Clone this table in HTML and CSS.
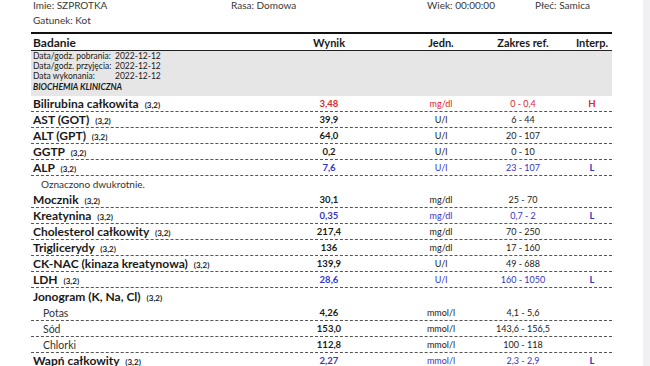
FILE: index.html
```html
<!DOCTYPE html>
<html lang="pl">
<head>
  <meta charset="UTF-8" />
  <title>Wynik badania</title>
  <link rel="stylesheet" href="styles.css">
</head>
<body>
  <div class="page">
    <div class="info">
      <span>Imie: SZPROTKA</span>
      <span>Rasa: Domowa</span>
      <span>Wiek: 00:00:00</span>
      <span>Płeć: Samica</span>
    </div>
    <div class="info second">
      <span>Gatunek: Kot</span>
    </div>

    <div class="row thead">
      <span class="name">Badanie</span>
      <span>Wynik</span>
      <span>Jedn.</span>
      <span>Zakres ref.</span>
      <span>Interp.</span>
    </div>

    <div class="meta">
      <span>Data/godz. pobrania:</span><span>2022-12-12</span>
      <span>Data/godz. przyjęcia:</span><span>2022-12-12</span>
      <span>Data wykonania:</span><span>2022-12-12</span>
      <b class="section">BIOCHEMIA KLINICZNA</b>
    </div>

    <div class="row high">
      <span class="name">Bilirubina całkowita <small>(3,2)</small></span>
      <span class="val">3,48</span><span>mg/dl</span><span>0 - 0,4</span><span class="flag">H</span>
    </div>
    <div class="row">
      <span class="name">AST (GOT) <small>(3,2)</small></span>
      <span class="val">39,9</span><span>U/l</span><span>6 - 44</span><span></span>
    </div>
    <div class="row">
      <span class="name">ALT (GPT) <small>(3,2)</small></span>
      <span class="val">64,0</span><span>U/l</span><span>20 - 107</span><span></span>
    </div>
    <div class="row">
      <span class="name">GGTP <small>(3,2)</small></span>
      <span class="val">0,2</span><span>U/l</span><span>0 - 10</span><span></span>
    </div>
    <div class="row low">
      <span class="name">ALP <small>(3,2)</small></span>
      <span class="val">7,6</span><span>U/l</span><span>23 - 107</span><span class="flag">L</span>
    </div>
    <div class="note">Oznaczono dwukrotnie.</div>
    <div class="row">
      <span class="name">Mocznik <small>(3,2)</small></span>
      <span class="val">30,1</span><span>mg/dl</span><span>25 - 70</span><span></span>
    </div>
    <div class="row low">
      <span class="name">Kreatynina <small>(3,2)</small></span>
      <span class="val">0,35</span><span>mg/dl</span><span>0,7 - 2</span><span class="flag">L</span>
    </div>
    <div class="row">
      <span class="name">Cholesterol całkowity <small>(3,2)</small></span>
      <span class="val">217,4</span><span>mg/dl</span><span>70 - 250</span><span></span>
    </div>
    <div class="row">
      <span class="name">Triglicerydy <small>(3,2)</small></span>
      <span class="val">136</span><span>mg/dl</span><span>17 - 160</span><span></span>
    </div>
    <div class="row">
      <span class="name">CK-NAC (kinaza kreatynowa) <small>(3,2)</small></span>
      <span class="val">139,9</span><span>U/l</span><span>49 - 688</span><span></span>
    </div>
    <div class="row low">
      <span class="name">LDH <small>(3,2)</small></span>
      <span class="val">28,6</span><span>U/l</span><span>160 - 1050</span><span class="flag">L</span>
    </div>
    <div class="row group">
      <span class="name">Jonogram (K, Na, Cl) <small>(3,2)</small></span>
    </div>
    <div class="row sub">
      <span class="name">Potas</span>
      <span class="val">4,26</span><span>mmol/l</span><span>4,1 - 5,6</span><span></span>
    </div>
    <div class="row sub">
      <span class="name">Sód</span>
      <span class="val">153,0</span><span>mmol/l</span><span>143,6 - 156,5</span><span></span>
    </div>
    <div class="row sub">
      <span class="name">Chlorki</span>
      <span class="val">112,8</span><span>mmol/l</span><span>100 - 118</span><span></span>
    </div>
    <div class="row low last">
      <span class="name">Wapń całkowity <small>(3,2)</small></span>
      <span class="val">2,27</span><span>mmol/l</span><span>2,3 - 2,9</span><span class="flag">L</span>
    </div>
  </div>
</body>
</html>
```

FILE: styles.css
```css
body { margin: 0; background: #f1f1f4; font-family: 'Lato', 'Liberation Sans', sans-serif; color: #1a1a1a; overflow: hidden; }
.page { width: 581px; height: 366px; padding: 0 31px; background: #fff; overflow: hidden; }

.info { display: grid; grid-template-columns: 198px 196px 108px auto; padding-left: 2px; font-size: 10px; line-height: 11px; color: #383838; white-space: nowrap; }
.info.second { margin-top: 4px; }

.row { display: grid; grid-template-columns: 219px 158px 66px 98px 40px; align-items: center; height: 15px; border-bottom: 1px dashed #555; font-size: 9px; text-align: center; white-space: nowrap; }
.row .name { text-align: left; padding-left: 2px; font-size: 12px; font-weight: 700; }
.row small { font-size: 8px; font-weight: 700; margin-left: 3px; }
.row .val, .row .flag { font-weight: 700; font-size: 9.5px; }

.thead { margin-top: 6px; height: 16px; border-top: 2px solid #111; border-bottom: 1px solid #222; font-size: 11px; font-weight: 700; }
.thead .name { font-size: 12px; }

.meta { display: grid; grid-template-columns: 82px auto; padding: 0 0 3px 2px; background: #e6e6e6; font-size: 8.5px; line-height: 10px; white-space: nowrap; }
.meta .section { grid-column: 1 / 3; font-size: 8.5px; font-style: italic; line-height: 12px; }

.high { color: #e3262b; }
.high .name { color: #1a1a1a; }
.low { color: #3434c8; }
.low .name { color: #1a1a1a; }

.note { height: 16px; line-height: 16px; padding-left: 10px; font-size: 10px; color: #333; }
.row.group { height: 17px; border-bottom: none; }
.row.sub .name { font-size: 10.5px; font-weight: 400; padding-left: 12px; color: #333; }
.row.last { border-bottom: none; }
```
